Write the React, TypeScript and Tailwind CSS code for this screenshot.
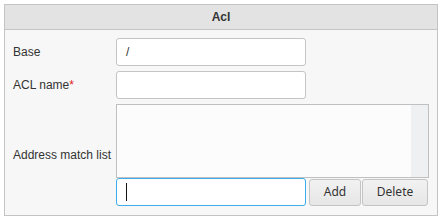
export default function App() {
  return (
    <div className="w-[442px] h-[221px] bg-white p-[4px] font-['Liberation_Sans',Arial,sans-serif] text-[12px] text-[#333]">
      <div className="w-[434px] h-[212px] border border-[#c4c4c4] bg-[#f7f7f7] flex flex-col">
        <div className="h-[25px] shrink-0 border-b border-[#c4c4c4] bg-[#e3e3e3] flex items-center justify-center font-bold">
          Acl
        </div>

        <div className="pt-[8px] pb-[9px] pr-[8px]">
          <div className="flex items-center h-[28px]">
            <div className="w-[111px] pl-[8px]">Base</div>
            <div className="w-[190px] h-[28px] rounded-[3px] border border-[#c4c4c4] bg-white flex items-center pl-[9px]">
              /
            </div>
          </div>

          <div className="flex items-center h-[28px] mt-[5px]">
            <div className="w-[111px] pl-[8px]">
              ACL name<span className="text-[#e0191b]">*</span>
            </div>
            <div className="w-[190px] h-[28px] rounded-[3px] border border-[#c4c4c4] bg-white" />
          </div>

          <div className="flex items-center mt-[5px]">
            <div className="w-[111px] pl-[8px]">Address match list</div>
            <div className="flex flex-col">
              {/* list box with empty scrollbar track */}
              <div className="w-[313px] h-[74px] border border-[#c0c0c0] bg-[#fcfcfc] flex justify-end">
                <div className="w-[17px] h-full bg-[#eff0f1]" />
              </div>
              <div className="flex items-center h-[28px]">
                <div className="w-[190px] h-[28px] rounded-[3px] border border-[#3daee9] bg-white flex items-center pl-[9px]">
                  <span className="w-px h-[18px] bg-[#111]" />
                </div>
                <button className="ml-[3px] w-[52px] h-[27px] rounded-[3px] border border-[#c4c4c4] bg-gradient-to-b from-[#f2f2f2] to-[#e6e6e6] font-['Noto_Sans',sans-serif] text-[12px] text-[#333]">
                  Add
                </button>
                <button className="ml-[1px] w-[66px] h-[27px] rounded-[3px] border border-[#c4c4c4] bg-gradient-to-b from-[#f2f2f2] to-[#e6e6e6] font-['Noto_Sans',sans-serif] text-[12px] text-[#333]">
                  Delete
                </button>
              </div>
            </div>
          </div>
        </div>
      </div>
    </div>
  );
}
